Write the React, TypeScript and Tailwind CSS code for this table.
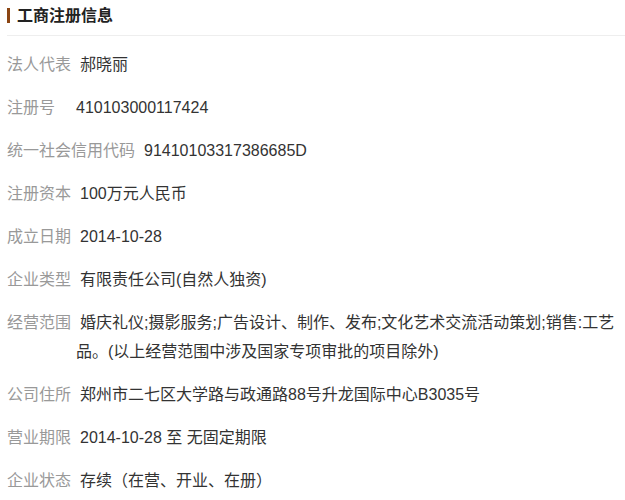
const rows: { label: string; value: React.ReactNode; gap?: string }[] = [
  { label: "法人代表", value: "郝晓丽" },
  { label: "注册号", value: "410103000117424", gap: "mr-[21px]" },
  { label: "统一社会信用代码", value: "91410103317386685D" },
  { label: "注册资本", value: "100万元人民币" },
  { label: "成立日期", value: "2014-10-28" },
  { label: "企业类型", value: "有限责任公司(自然人独资)" },
  {
    label: "经营范围",
    value: (
      <>
        婚庆礼仪;摄影服务;广告设计、制作、发布;文化艺术交流活动策划;销售:工艺
        <br />
        品。(以上经营范围中涉及国家专项审批的项目除外)
      </>
    ),
  },
  { label: "公司住所", value: "郑州市二七区大学路与政通路88号升龙国际中心B3035号" },
  { label: "营业期限", value: "2014-10-28 至 无固定期限" },
  { label: "企业状态", value: "存续（在营、开业、在册）" },
];

export default function App() {
  return (
    <div
      className="h-[500px] w-[625px] overflow-hidden bg-white pl-[7px]"
      style={{ fontFamily: '"Liberation Sans", "Noto Sans CJK SC", sans-serif' }}
    >
      <div className="flex h-[36px] items-center border-b border-[#eeeeee] pb-[4px]">
        <span className="mr-[7px] h-[15px] w-[3px] bg-[#8b4513]" />
        <h2 className="text-[16px] font-bold text-[#222]">工商注册信息</h2>
      </div>

      {rows.map((r) => (
        <div key={r.label} className="mt-[14px] pl-[69px] indent-[-69px] text-[16px] leading-[29px]">
          <span className={`text-[#999] ${r.gap ?? "mr-[9px]"}`}>{r.label}</span>
          <span className="text-[#333]">{r.value}</span>
        </div>
      ))}
    </div>
  );
}
